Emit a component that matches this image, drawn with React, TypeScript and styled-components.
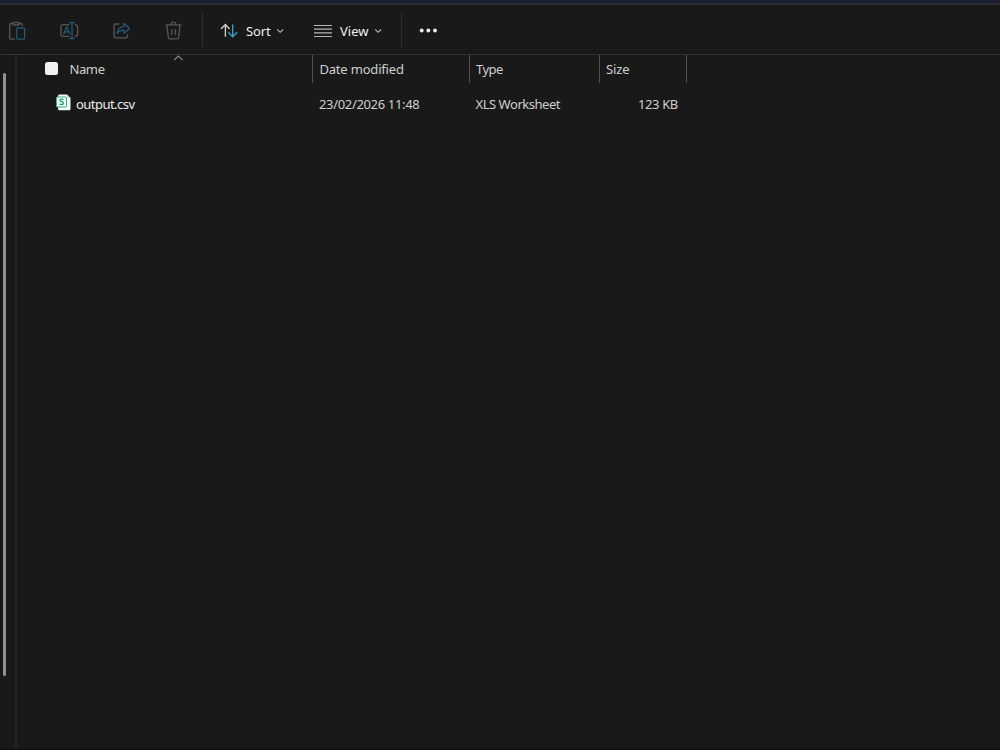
import React from "react";
import styled, { createGlobalStyle } from "styled-components";

const Global = createGlobalStyle`
  * { box-sizing: border-box; }
  body { margin: 0; background: #191919; overflow: hidden; }
`;

const Window = styled.div`
  width: 1000px;
  height: 750px;
  display: flex;
  flex-direction: column;
  background: #191919;
  color: #cfcfcf;
  font: 13px/18px "Noto Sans", "Open Sans", sans-serif;
  border-bottom: 2px solid #141414;
`;

const TitleEdge = styled.div`
  height: 5px;
  flex: none;
  background: #1b2130;
  border-bottom: 2px solid #292a2c;
`;

const Toolbar = styled.div`
  height: 50px;
  flex: none;
  display: flex;
  align-items: center;
  border-bottom: 1px solid #333;
`;

const IconButton = styled.div<{ $w: number }>`
  width: ${(p) => p.$w}px;
  height: 50px;
  flex: none;
  svg { display: block; }
`;

const Divider = styled.div`
  width: 1px;
  height: 34px;
  flex: none;
  background: #2e2e2e;
`;

const MenuButton = styled.div<{ $w: number; $pad: number; $gap: number }>`
  width: ${(p) => p.$w}px;
  padding: 2px 0 0 ${(p) => p.$pad}px;
  display: flex;
  align-items: center;
  flex: none;
  color: #f0f0f0;
  svg { display: block; flex: none; }
  svg:first-child { margin-right: ${(p) => p.$gap}px; }
`;

const Label = styled.span<{ $spacing?: number; $w?: number; $bright?: boolean }>`
  white-space: nowrap;
  letter-spacing: ${(p) => p.$spacing ?? 0}px;
  ${(p) => (p.$w ? `width: ${p.$w}px;` : "")}
  ${(p) => (p.$bright ? "color: #ececec;" : "")}
`;

const Body = styled.div`
  flex: 1;
  display: flex;
`;

const NavEdge = styled.div`
  width: 17px;
  padding: 18px 0 0 3px;
  border-right: 2px solid #242424;
`;

const ScrollThumb = styled.div`
  width: 3px;
  height: 603px;
  border-radius: 2px;
  background: #929292;
`;

const FileList = styled.div`
  flex: 1;
`;

const HeaderRow = styled.div`
  height: 28px;
  display: flex;
`;

const HeaderCell = styled.div<{ $w: number; $pad: number }>`
  position: relative;
  width: ${(p) => p.$w}px;
  height: 28px;
  padding-left: ${(p) => p.$pad}px;
  display: flex;
  align-items: center;
  border-right: 1px solid #505050;
`;

const Checkbox = styled.div`
  width: 13px;
  height: 13px;
  margin: -1px 12px 0 0;
  border-radius: 2.5px;
  background: #f3f3f3;
`;

const SortMark = styled.svg`
  position: absolute;
  left: 156px;
  top: 0;
`;

const FileRow = styled.div`
  height: 28px;
  margin-top: 7px;
  display: flex;
`;

const Cell = styled.div<{ $w: number; $pad: number }>`
  width: ${(p) => p.$w}px;
  padding-left: ${(p) => p.$pad}px;
  display: flex;
  align-items: center;
  svg { display: block; margin: -3px 5px 0 0; }
`;

const GREY = "#565656";
const BLUE = "#245a75";

const Chevron = () => (
  <svg width="8" height="8" viewBox="0 0 8 8" fill="none" stroke="#b8b8b8" strokeWidth="1.1">
    <path d="M1.3 2.5 4.2 5.3 7.1 2.5" />
  </svg>
);

const Paste = () => (
  <svg width="43" height="50" fill="none" stroke={GREY} strokeWidth="1.3">
    <path d="M12.8 18.5h-2.1q-1 0-1 1v13.7q0 1 1 1h4.2M19.2 18.5h2.1q1 0 1 1v1.8" />
    <rect x="12.9" y="17.5" width="6.6" height="2.5" rx="1.2" />
    <rect x="16.8" y="22.8" width="7.8" height="11.4" rx="1.2" stroke={BLUE} />
  </svg>
);

const Rename = () => (
  <svg width="52" height="50" fill="none" stroke={GREY} strokeWidth="1.3">
    <path d="M26.3 19.7h-6.3q-2.1 0-2.1 2.1v7.4q0 2.1 2.1 2.1h6.3M31.6 19.7q3 0 3 2.1v7.4q0 2.1-3 2.1" />
    <path d="m20.5 29.2 3.2-7.5L26.9 29.2M21.6 26.8h4.2M26.5 17.6h5M29 17.6v15.9M26.5 33.5h5" stroke={BLUE} />
  </svg>
);

const Share = () => (
  <svg width="52" height="50" fill="none" stroke={GREY} strokeWidth="1.3" strokeLinejoin="round">
    <path d="M24.3 19h-3.6q-1.6 0-1.6 1.6v10.6q0 1.7 1.6 1.7h10.2q1.6 0 1.6-1.7v-2" />
    <path d="M29 18.3 34.6 23.4l-5.6 4.8v-3q-4.4 0-6.8 3.1.3-6 6.8-7z" stroke={BLUE} />
  </svg>
);

const Trash = () => (
  <svg width="55" height="50" fill="none" stroke={GREY} strokeWidth="1.3">
    <path d="M18.5 19.9h16M24 19.6q0-2.4 2.5-2.4t2.5 2.4M20 20.1l1.3 12q.2 1.8 1.9 1.8h6.6q1.7 0 1.9-1.8l1.3-12M24.7 24v6M28.3 24v6" />
  </svg>
);

const SortIcon = () => (
  <svg width="18" height="16" viewBox="0 0 18 16" fill="none" strokeWidth="1.4">
    <path d="M5.4 13.8V1.6M1 6l4.4-4.5L9.6 6" stroke="#cacaca" />
    <path d="M12.7 1.6v12.2M8.3 9.3l4.4 4.4 4.4-4.4" stroke="#399fca" />
  </svg>
);

const ViewIcon = () => (
  <svg width="18" height="14" viewBox="0 0 18 14" stroke="#b5b5b5" strokeWidth="1.2">
    <path d="M0 1.5h18M0 5.2h18M0 8.8h18M0 12.5h18" />
  </svg>
);

const More = () => (
  <svg width="60" height="50" fill="#f0f0f0">
    <circle cx="19.7" cy="25.5" r="1.9" />
    <circle cx="26.3" cy="25.5" r="1.9" />
    <circle cx="33" cy="25.5" r="1.9" />
  </svg>
);

const SheetIcon = () => (
  <svg width="16" height="17" viewBox="0 0 16 17">
    <path d="M4.3.6h7.7l3.5 3.3v11.2q0 1.2-1.2 1.2H4.3q-1.2 0-1.2-1.2V1.8Q3.1.6 4.3.6z" fill="#f5faf7" />
    <path d="M12 .6v3.3h3.5z" fill="#c8d5ce" />
    <rect x="1.5" y="3" width="10" height="10" rx="1" fill="#e9fff5" stroke="#3dae84" strokeWidth="1" />
    <path d="M8.2 5.7q-.7-.6-1.7-.6-1.6 0-1.6 1.2 0 1 1.7 1.4 1.8.4 1.8 1.6 0 1.3-1.9 1.3-1.1 0-1.9-.6" fill="none" stroke="#20936a" strokeWidth="1.2" />
  </svg>
);

export default function App() {
  return (
    <Window>
      <Global />
      <TitleEdge />
      <Toolbar>
        <IconButton $w={43}><Paste /></IconButton>
        <IconButton $w={52}><Rename /></IconButton>
        <IconButton $w={52}><Share /></IconButton>
        <IconButton $w={55}><Trash /></IconButton>
        <Divider />
        <MenuButton $w={104} $pad={17} $gap={8}>
          <SortIcon />
          <Label $w={30} $spacing={-0.1}>Sort</Label>
          <Chevron />
        </MenuButton>
        <MenuButton $w={94} $pad={7} $gap={8}>
          <ViewIcon />
          <Label $w={34}>View</Label>
          <Chevron />
        </MenuButton>
        <Divider />
        <IconButton $w={60}><More /></IconButton>
      </Toolbar>
      <Body>
        <NavEdge>
          <ScrollThumb />
        </NavEdge>
        <FileList>
          <HeaderRow>
            <HeaderCell $w={296} $pad={27.5}>
              <Checkbox />
              <Label $spacing={-0.4}>Name</Label>
              <SortMark width="10" height="6" fill="none" stroke="#858585" strokeWidth="1.1">
                <path d="M1.2 5 5.4 1 9.6 5" />
              </SortMark>
            </HeaderCell>
            <HeaderCell $w={157} $pad={6.4}><Label $spacing={-0.18}>Date modified</Label></HeaderCell>
            <HeaderCell $w={130} $pad={6}><Label $spacing={-0.5}>Type</Label></HeaderCell>
            <HeaderCell $w={87} $pad={6}><Label $spacing={-0.1}>Size</Label></HeaderCell>
          </HeaderRow>
          <FileRow>
            <Cell $w={302} $pad={38}><SheetIcon /><Label $bright $spacing={-0.54}>output.csv</Label></Cell>
            <Cell $w={156.5} $pad={0}><Label $spacing={-0.34}>23/02/2026 11:48</Label></Cell>
            <Cell $w={162.5} $pad={0}><Label $spacing={-0.46}>XLS Worksheet</Label></Cell>
            <Cell $w={60} $pad={0}><Label $spacing={-0.38}>123 KB</Label></Cell>
          </FileRow>
        </FileList>
      </Body>
    </Window>
  );
}
